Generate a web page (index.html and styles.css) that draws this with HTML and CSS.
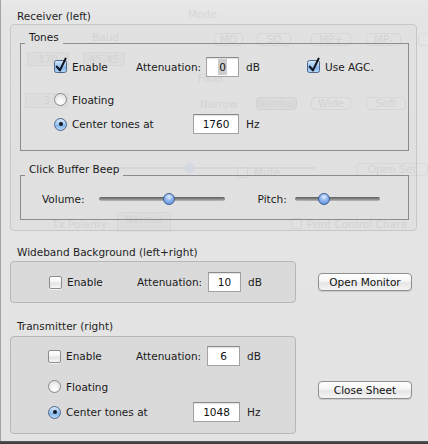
FILE: index.html
```html
<!DOCTYPE html>
<html lang="en">
<head>
<meta charset="utf-8">
<title>Sheet</title>
<link rel="stylesheet" href="styles.css">
</head>
<body>
<svg class="defs" width="0" height="0" aria-hidden="true">
  <defs>
    <linearGradient id="gBlue" x1="0" y1="0" x2="0" y2="1">
      <stop offset="0" stop-color="#d6e8fb"/>
      <stop offset="0.5" stop-color="#9cc3ef"/>
      <stop offset="0.55" stop-color="#7eb0ea"/>
      <stop offset="1" stop-color="#b9dafb"/>
    </linearGradient>
  </defs>
</svg>
<div class="screen">
  <div class="ghost" aria-hidden="true">
    <span class="g gt" style="left:188px;top:8px">Mode</span>
    <span class="g gt" style="left:92px;top:31px">Baud</span>
    <span class="g gbox" style="left:27px;top:52px;width:42px;height:14px">170</span>
    <span class="g gbox" style="left:83px;top:52px;width:42px;height:14px">45.45</span>
    <span class="g gbox" style="left:25px;top:93px;width:43px;height:15px">3</span>
    <span class="g gt" style="left:198px;top:72px">Filter</span>
    <span class="g gbtn" style="left:214px;top:33px;width:29px">MD</span>
    <span class="g gbtn" style="left:257px;top:33px;width:34px">SQ</span>
    <span class="g gbtn" style="left:311px;top:33px;width:40px">MP+</span>
    <span class="g gbtn" style="left:366px;top:33px;width:35px">MP-</span>
    <span class="g gbtn" style="left:418px;top:33px;width:30px"></span>
    <span class="g gt" style="left:200px;top:98px">Narrow</span>
    <span class="g gbtn dark" style="left:256px;top:97px;width:41px">Normal</span>
    <span class="g gbtn" style="left:311px;top:97px;width:40px">Wide</span>
    <span class="g gbtn" style="left:366px;top:97px;width:40px">Soft</span>
    <span class="g gline" style="left:95px;top:167px;width:220px"></span>
    <span class="g gknob" style="left:185px;top:163px"></span>
    <span class="g gcb" style="left:237px;top:167px"></span>
    <span class="g gt" style="left:254px;top:166px">Mute</span>
    <span class="g gbtn" style="left:356px;top:163px;width:72px">Open Set</span>
    <span class="g gt" style="left:52px;top:218px">Tx Polarity:</span>
    <span class="g gbox" style="left:117px;top:212px;width:54px;height:20px">Normal</span>
    <span class="g gcb" style="left:291px;top:218px"></span>
    <span class="g gt" style="left:307px;top:218px">Print Control Chara</span>
  </div>

  <div class="sheet">
    <div class="sec-title t-recv">Receiver (left)</div>
    <div class="recv-box">
      <fieldset class="group tones">
        <legend>Tones</legend>
        <div class="gbody">
          <div class="row h20">
            <div class="opt w82">
              <svg class="cbx" width="14" height="16" viewBox="0 0 14 16"><rect x="0.5" y="2.5" width="12" height="12" rx="2" fill="url(#gBlue)" stroke="#4f6788"/><path d="M2.8 8.6 L5.9 12.4 L11.6 0.6" stroke="#10151d" stroke-width="2.1" fill="none" stroke-linecap="round" stroke-linejoin="round"/></svg>
              <span>Enable</span>
            </div>
            <span class="lab w70">Attenuation:</span>
            <span class="field w33"><span class="sel">0</span></span>
            <span class="unit u-agc">dB</span>
            <div class="opt">
              <svg class="cbx" width="14" height="16" viewBox="0 0 14 16"><rect x="0.5" y="2.5" width="12" height="12" rx="2" fill="url(#gBlue)" stroke="#4f6788"/><path d="M2.8 8.6 L5.9 12.4 L11.6 0.6" stroke="#10151d" stroke-width="2.1" fill="none" stroke-linecap="round" stroke-linejoin="round"/></svg>
              <span>Use AGC.</span>
            </div>
          </div>
          <div class="row h13 mt16">
            <div class="opt"><span class="rb"></span><span>Floating</span></div>
          </div>
          <div class="row h20 mt8">
            <div class="opt w139"><span class="rb on"></span><span>Center tones at</span></div>
            <span class="field w46">1760</span>
            <span class="unit">Hz</span>
          </div>
        </div>
      </fieldset>

      <fieldset class="group beep">
        <legend>Click Buffer Beep</legend>
        <div class="gbody">
          <div class="row h16">
            <span class="slab">Volume:</span>
            <div class="slider s-vol"><span class="knob" style="left:55.5%"></span></div>
            <span class="slab s-pitch">Pitch:</span>
            <div class="slider s-pit"><span class="knob" style="left:34%"></span></div>
          </div>
        </div>
      </fieldset>
    </div>

    <div class="sec-title t-wide">Wideband Background (left+right)</div>
    <div class="pair">
      <div class="panel p-wide">
        <div class="row h20">
          <div class="opt w88"><span class="cb"></span><span>Enable</span></div>
          <span class="lab w71">Attenuation:</span>
          <span class="field w33">10</span>
          <span class="unit">dB</span>
        </div>
      </div>
      <button class="btn b-open" type="button">Open Monitor</button>
    </div>

    <div class="sec-title t-tx">Transmitter (right)</div>
    <div class="pair top">
      <div class="panel p-tx">
        <div class="row h20">
          <div class="opt w88"><span class="cb"></span><span>Enable</span></div>
          <span class="lab w71">Attenuation:</span>
          <span class="field w33">6</span>
          <span class="unit">dB</span>
        </div>
        <div class="row h13 mt14">
          <div class="opt"><span class="rb"></span><span>Floating</span></div>
        </div>
        <div class="row h20 mt9">
          <div class="opt w145"><span class="rb on"></span><span>Center tones at</span></div>
          <span class="field w47">1048</span>
          <span class="unit">Hz</span>
        </div>
      </div>
      <button class="btn b-close" type="button">Close Sheet</button>
    </div>
  </div>
  <div class="bottom-bar"></div>
</div>
</body>
</html>
```

FILE: styles.css
```css
* { box-sizing: border-box; }
html, body { margin: 0; padding: 0; }
body {
  background: #e4e4e4;
  font-family: "DejaVu Sans", "Noto Sans", sans-serif;
  font-size: 10.5px;
  color: #1a1a1a;
}
.defs { position: absolute; width: 0; height: 0; }

.screen {
  position: relative;
  width: 428px;
  height: 444px;
  overflow: hidden;
  display: flex;
  flex-direction: column;
  background: linear-gradient(#e9e9e9 0, #e5e5e5 12px, #e4e4e4 240px, #e3e3e3 100%);
}

/* faint window visible through the translucent sheet */
.ghost {
  position: absolute;
  left: 0; top: 0;
  width: 428px; height: 240px;
  color: #d7d7d7;
  pointer-events: none;
}
.g { position: absolute; white-space: nowrap; line-height: 12px; }
.gbox {
  border: 1px solid #dbdbdb;
  background: rgba(0,0,0,0.015);
  text-align: center;
  line-height: 12px;
}
.gbtn {
  height: 13px;
  border: 1px solid #dadada;
  border-radius: 4px;
  text-align: center;
  line-height: 11px;
}
.gbtn.dark { background: #dfdfdf; border-color: #d6d6d6; }
.gline { height: 2px; background: #dadada; border-radius: 1px; }
.gknob { width: 10px; height: 10px; border-radius: 50%; background: #d8dce4; }
.gcb { width: 11px; height: 11px; border: 1px solid #d9d9d9; border-radius: 2px; }

.sheet {
  position: relative;
  flex: 1;
  padding: 10px 0 0 10px;
  box-shadow: inset 1px 0 0 #a4a4a4;
}
.bottom-bar {
  height: 3px;
  background: linear-gradient(#5a5a5a, #353535);
}

.sec-title { line-height: 13px; color: #1e1e1e; white-space: nowrap; }
.t-recv { margin: 0 0 1px 7px; }
.t-wide { margin: 15px 0 2px 7px; }
.t-tx { margin: 17px 0 3px 7px; }

.recv-box {
  width: 407px;
  border: 1px solid #c7c7c7;
  border-radius: 4px;
  background: rgba(0, 0, 0, 0.015);
  padding: 6px 0 10px 9px;
}

.group {
  margin: 0;
  width: 389px;
  min-inline-size: 0;
  border: 1px solid #8c8c8c;
  border-radius: 0;
  padding: 0;
}
.group legend {
  margin-left: 4px;
  padding: 0 4px 12px;
  line-height: 13px;
  white-space: nowrap;
}
.tones { padding: 1px 0 16px 0; }
.tones .gbody { padding-left: 33px; }
.beep { margin-top: 12px; padding: 3px 0 12px 0; }
.beep .gbody { padding-left: 21px; }

.row { display: flex; align-items: center; white-space: nowrap; }
.h20 { height: 20px; }
.h16 { height: 16px; }
.h13 { height: 13px; }
.mt16 { margin-top: 16px; }
.mt14 { margin-top: 14px; }
.mt9 { margin-top: 9px; }
.mt8 { margin-top: 8px; }

.opt { display: flex; align-items: center; flex: none; }
.w82 { width: 82px; }
.w88 { width: 88px; }
.w139 { width: 139px; }
.w145 { width: 145px; }
.lab { flex: none; }
.w70 { width: 70px; }
.w71 { width: 71px; }

.cbx { flex: none; margin: -3px 4px 0 0; overflow: visible; }
.cb {
  flex: none;
  width: 13px; height: 13px;
  margin-right: 5px;
  border: 1px solid #8d8d8d;
  border-radius: 2px;
  background: linear-gradient(#ffffff 0, #f4f4f4 45%, #e2e2e2 55%, #f7f7f7 100%);
  box-shadow: 0 1px 0 rgba(255,255,255,0.6);
}
.rb {
  flex: none;
  width: 13px; height: 13px;
  margin-right: 5px;
  border: 1px solid #8a8a8a;
  border-radius: 50%;
  background: radial-gradient(circle at 50% 70%, #ffffff 0, #f1f1f1 45%, #d6d6d6 100%);
  position: relative;
}
.rb.on {
  border-color: #4f6788;
  background: linear-gradient(#d6e8fb 0, #9cc3ef 50%, #7eb0ea 55%, #b9dafb 100%);
}
.rb.on::after {
  content: "";
  position: absolute;
  left: 3.5px; top: 3.5px;
  width: 4px; height: 4px;
  border-radius: 50%;
  background: #141a24;
}

.field {
  flex: none;
  height: 20px;
  background: #ffffff;
  border: 1px solid #a3a3a3;
  border-top-color: #8a8a8a;
  box-shadow: inset 0 1px 1px rgba(0,0,0,0.12);
  text-align: center;
  line-height: 18px;
  color: #111;
}
.w33 { width: 33px; }
.w46 { width: 46px; }
.w47 { width: 47px; }
.sel { background: #cdcdcd; padding: 2px 1px; }

.unit { flex: none; margin-left: 7px; }
.u-agc { width: 61px; }

.slab { flex: none; }
.slider {
  position: relative;
  flex: none;
  height: 4px;
  border-radius: 2px;
  background: linear-gradient(#5d5d5d, #8f8f8f 60%, #bdbdbd);
}
.s-vol { width: 126px; margin-left: 14px; }
.s-pitch { margin-left: 33px; }
.s-pit { width: 85px; margin-left: 8px; }
.knob {
  position: absolute;
  top: -4px;
  width: 12px; height: 12px;
  margin-left: -6px;
  border-radius: 50%;
  border: 1px solid #3f5e93;
  background: radial-gradient(circle at 50% 30%, #e4efff 0, #8fb5ee 45%, #4f86db 100%);
}

.pair { display: flex; align-items: center; }
.pair.top { align-items: flex-start; }
.panel {
  flex: none;
  width: 286px;
  border: 1px solid #b7b7b7;
  border-radius: 4px;
  background: #dadada;
}
.p-wide { padding: 10px 0 10px 38px; }
.p-tx { padding: 9px 0 11px 37px; }

.btn {
  flex: none;
  width: 94px;
  height: 18px;
  margin-left: 22px;
  padding: 0;
  font-family: inherit;
  font-size: 10.5px;
  color: #111;
  border: 1px solid #8f8f8f;
  border-radius: 4px;
  background: linear-gradient(#ffffff 0, #f6f6f6 45%, #e6e6e6 55%, #f4f4f4 100%);
  box-shadow: 0 1px 1px rgba(0,0,0,0.12);
  line-height: 16px;
}
.b-close { margin-top: 45px; }
```
